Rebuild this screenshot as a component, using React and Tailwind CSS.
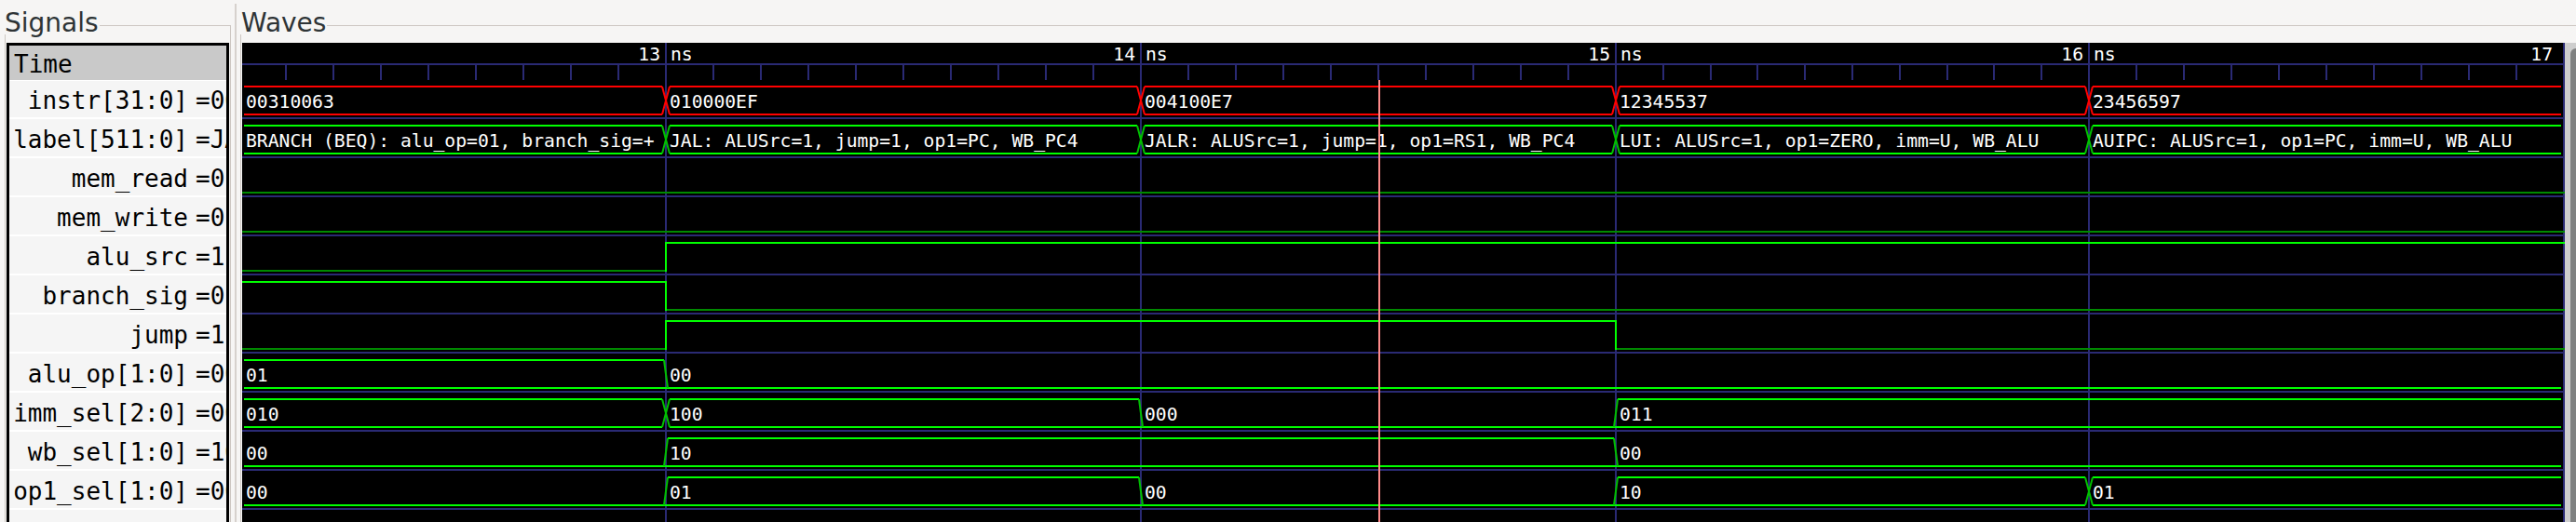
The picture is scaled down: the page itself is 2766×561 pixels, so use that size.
import React from "react";

const NAVY = "#2a2a74";
const RED = "#ff0000";
const GREEN = "#00ff00";
const GREEN_T = "#00c000";
const LOW = "#008a00";
const MAJ = [455, 965, 1475, 1983, 2493];
const W = 2494;
const H = 515;
const END = 2490;
const topY = (i) => 47 + 42 * i;
const botY = (i) => 77 + 42 * i;

const names = [
  "instr[31:0]",
  "label[511:0]",
  "mem_read",
  "mem_write",
  "alu_src",
  "branch_sig",
  "jump",
  "alu_op[1:0]",
  "imm_sel[2:0]",
  "wb_sel[1:0]",
  "op1_sel[1:0]",
];
const values = [
  "=004100E7",
  "=JALR: ALUSrc=1, jump=1, op1=RS1, WB_PC4",
  "=0",
  "=0",
  "=1",
  "=0",
  "=1",
  "=00",
  "=000",
  "=10",
  "=00",
];

const buses = [
  {
    row: 0,
    color: RED,
    tcolor: RED,
    segs: [
      { x: 0, v: "00310063" },
      { x: 455, v: "010000EF" },
      { x: 965, v: "004100E7" },
      { x: 1475, v: "12345537" },
      { x: 1983, v: "23456597" },
    ],
  },
  {
    row: 1,
    color: GREEN,
    tcolor: GREEN_T,
    segs: [
      { x: 0, v: "BRANCH (BEQ): alu_op=01, branch_sig=+" },
      { x: 455, v: "JAL: ALUSrc=1, jump=1, op1=PC, WB_PC4" },
      { x: 965, v: "JALR: ALUSrc=1, jump=1, op1=RS1, WB_PC4" },
      { x: 1475, v: "LUI: ALUSrc=1, op1=ZERO, imm=U, WB_ALU" },
      { x: 1983, v: "AUIPC: ALUSrc=1, op1=PC, imm=U, WB_ALU" },
    ],
  },
  {
    row: 7,
    color: GREEN,
    tcolor: GREEN_T,
    segs: [
      { x: 0, v: "01" },
      { x: 455, v: "00", z: true },
    ],
  },
  {
    row: 8,
    color: GREEN,
    tcolor: GREEN_T,
    segs: [
      { x: 0, v: "010" },
      { x: 455, v: "100" },
      { x: 965, v: "000", z: true },
      { x: 1475, v: "011" },
    ],
  },
  {
    row: 9,
    color: GREEN,
    tcolor: GREEN_T,
    segs: [
      { x: 0, v: "00", z: true },
      { x: 455, v: "10" },
      { x: 1475, v: "00", z: true },
    ],
  },
  {
    row: 10,
    color: GREEN,
    tcolor: GREEN_T,
    segs: [
      { x: 0, v: "00", z: true },
      { x: 455, v: "01" },
      { x: 965, v: "00", z: true },
      { x: 1475, v: "10" },
      { x: 1983, v: "01" },
    ],
  },
];

function busElements({ row, color, tcolor, segs }) {
  const t = topY(row);
  const b = botY(row);
  const els = [];
  segs.forEach((s, k) => {
    const prev = k > 0 ? segs[k - 1] : null;
    const next = k < segs.length - 1 ? segs[k + 1] : null;
    const a = s.x;
    const e = next ? next.x : END;
    const z = !!s.z;
    const xPrev = prev && !prev.z && !z;
    const xNext = next && !next.z && !z;
    if (!z) {
      const la = !prev ? 2 : xPrev ? a + 4 : a + 2;
      const lb = !next ? END : xNext ? e - 4 : e - 2;
      els.push(
        <line key={`t${row}-${k}`} x1={la} x2={lb} y1={t} y2={t} stroke={color} strokeWidth="2" />
      );
    }
    const ba = !prev ? 2 : xPrev ? a + 4 : a;
    const bb = !next ? END : xNext ? e - 4 : e;
    els.push(
      <line key={`b${row}-${k}`} x1={ba} x2={bb} y1={b} y2={b} stroke={color} strokeWidth="2" />
    );
    els.push(
      <text key={`x${row}-${k}`} x={prev ? a + 4 : 4} y={t + 23} fill="#ffffff">
        {s.v}
      </text>
    );
    if (prev) {
      if (!prev.z && !z) {
        els.push(
          <path
            key={`d${row}-${k}`}
            d={`M${a - 4} ${t} L${a + 4} ${b} M${a - 4} ${b} L${a + 4} ${t}`}
            stroke={tcolor}
            strokeWidth="2"
            fill="none"
          />
        );
      } else if (!prev.z && z) {
        els.push(
          <path key={`d${row}-${k}`} d={`M${a - 2} ${t} L${a + 2} ${b}`} stroke={tcolor} strokeWidth="2" fill="none" />
        );
      } else if (prev.z && !z) {
        els.push(
          <path key={`d${row}-${k}`} d={`M${a - 2} ${b} L${a + 2} ${t}`} stroke={tcolor} strokeWidth="2" fill="none" />
        );
      }
    }
  });
  return els;
}

function bitElements(row, changes) {
  const t = topY(row);
  const b = botY(row);
  const els = [];
  changes.forEach((c, k) => {
    const e = k < changes.length - 1 ? changes[k + 1].x : W;
    const y = c.v ? t : b;
    els.push(
      <line key={`h${row}-${k}`} x1={c.x} x2={e} y1={y} y2={y} stroke={c.v ? GREEN : LOW} strokeWidth="2" />
    );
    if (k > 0) {
      els.push(
        <line key={`v${row}-${k}`} x1={c.x} x2={c.x} y1={t - 1} y2={b + 1} stroke={GREEN} strokeWidth="2" />
      );
    }
  });
  return els;
}

function Waves() {
  const ticks = [];
  for (let j = 1; j <= 9; j++) {
    const x = Math.round(455 - 50.95 * j);
    if (x > 0) ticks.push(x);
  }
  for (let m = 0; m < MAJ.length - 1; m++) {
    for (let j = 1; j <= 9; j++) {
      ticks.push(Math.round(MAJ[m] + ((MAJ[m + 1] - MAJ[m]) * j) / 10));
    }
  }
  const labels = [
    [455, "13"],
    [965, "14"],
    [1475, "15"],
    [1983, "16"],
  ];
  return (
    <svg
      width={W}
      height={H}
      viewBox={`0 0 ${W} ${H}`}
      className="block shrink-0 bg-black font-['DejaVu_Sans_Mono',monospace] text-[19.7px]"
    >
      {Array.from({ length: 11 }).map((_, i) => (
        <line key={`s${i}`} x1="0" x2={W} y1={81 + 42 * i} y2={81 + 42 * i} stroke={NAVY} strokeWidth="2" />
      ))}
      <line x1="0" x2={W} y1="23" y2="23" stroke={NAVY} strokeWidth="2" />
      {MAJ.map((x) => (
        <line key={`m${x}`} x1={x} x2={x} y1="0" y2={H} stroke={NAVY} strokeWidth="2" />
      ))}
      {ticks.map((x) => (
        <line key={`k${x}`} x1={x} x2={x} y1="23" y2="40" stroke={NAVY} strokeWidth="2" />
      ))}
      {labels.map(([x, n]) => (
        <g key={`l${x}`} fill="#ffffff">
          <text x={x - 6} y="18.5" textAnchor="end">
            {n}
          </text>
          <text x={x + 5} y="18.5">
            ns
          </text>
        </g>
      ))}
      <text x="2481" y="18.5" textAnchor="end" fill="#ffffff">
        17
      </text>

      {buses.map((bus) => busElements(bus))}
      {bitElements(2, [{ x: 0, v: 0 }])}
      {bitElements(3, [{ x: 0, v: 0 }])}
      {bitElements(4, [
        { x: 0, v: 0 },
        { x: 455, v: 1 },
      ])}
      {bitElements(5, [
        { x: 0, v: 1 },
        { x: 455, v: 0 },
      ])}
      {bitElements(6, [
        { x: 0, v: 0 },
        { x: 455, v: 1 },
        { x: 1475, v: 0 },
      ])}

      <line x1="1221" x2="1221" y1="40" y2={H} stroke="#ff8a8a" strokeWidth="2" />
    </svg>
  );
}

export default function App() {
  return (
    <div className="w-[2766px] h-[561px] bg-[#f6f5f4] flex overflow-hidden">
      {/* Signals frame */}
      <div className="w-[248px] shrink-0 pl-[5px] flex flex-col">
        <div className="h-[37px] flex shrink-0">
          <span className="pt-[11px] text-[28px] leading-[28px] text-[#2e3436] font-['DejaVu_Sans',sans-serif] whitespace-nowrap">
            Signals
          </span>
          <div className="flex-1 mt-[27px] ml-[1px] border-t border-r border-[#cdc7c2]" />
        </div>
        <div className="flex-1 min-h-0 border-l border-r border-[#cdc7c2] px-[1px] pt-[9px] flex">
          <div className="flex-1 min-w-0 border-[3px] border-b-0 border-black bg-[#f5f5f5] flex flex-col font-['DejaVu_Sans_Mono',monospace] text-[26px] text-black overflow-hidden">
            <div className="h-[38px] shrink-0 border-b border-white bg-[#c9c9c9] flex items-center pl-[5px] pt-[3px] leading-[30px]">
              Time
            </div>
            {names.map((n, i) => (
              <div
                key={n}
                className={`${i === 0 ? "h-[41px]" : "h-[42px]"} shrink-0 border-b-2 border-white flex items-center pt-[3px] leading-[30px] whitespace-nowrap`}
              >
                <span className="w-[192px] shrink-0 text-right">{n}</span>
                <span className="ml-[8px] flex-1 min-w-0 overflow-hidden">{values[i]}</span>
              </div>
            ))}
          </div>
        </div>
      </div>

      {/* paned handle */}
      <div className="w-[10px] shrink-0 pt-[4px] pl-[4px] flex">
        <div className="w-[2px] bg-[#d6d1cd]" />
      </div>

      {/* Waves frame */}
      <div className="flex-1 min-w-0 flex flex-col">
        <div className="h-[37px] flex shrink-0 pl-[1px]">
          <span className="pt-[11px] text-[28px] leading-[28px] text-[#2e3436] font-['DejaVu_Sans',sans-serif] whitespace-nowrap">
            Waves
          </span>
          <div className="flex-1 mt-[27px] ml-[1px] border-t border-[#cdc7c2]" />
        </div>
        <div className="flex-1 min-h-0 border-l border-[#cdc7c2] pl-[1px] pt-[9px] flex">
          <Waves />
          <div className="w-[12px] shrink-0 bg-[#cecece] flex">
            <div className="flex-1 ml-[6px] mt-[6px] rounded-tl-[6px] bg-[#7f8181]" />
          </div>
        </div>
      </div>
    </div>
  );
}
